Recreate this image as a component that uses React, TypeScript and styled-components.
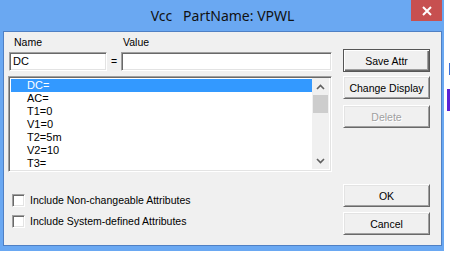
import styled, { createGlobalStyle } from "styled-components";

const GlobalStyle = createGlobalStyle`
  html, body {
    margin: 0;
    padding: 0;
  }
  body {
    width: 450px;
    height: 256px;
    overflow: hidden;
    background: #ffffff;
    font-family: "Liberation Sans", Arial, sans-serif;
    font-size: 10.5px;
    color: #000;
  }
`;

const Screen = styled.div`
  display: flex;
  width: 450px;
  height: 256px;
`;

const Window = styled.div`
  width: 444px;
  height: 251px;
  box-sizing: border-box;
  background: #6aa8f2;
  display: flex;
  flex-direction: column;
  padding: 0 2px 5px 3px;
`;

const TitleBar = styled.div`
  height: 31px;
  flex-shrink: 0;
  display: grid;
  grid-template-columns: 1fr auto 1fr;
`;

const TitleText = styled.div`
  grid-column: 2;
  padding-top: 6px;
  font-family: "Noto Sans", "Open Sans", sans-serif;
  font-size: 14px;
  line-height: 20px;
  white-space: pre;
  color: #111;
`;

const CloseButton = styled.div`
  grid-column: 3;
  justify-self: end;
  width: 31px;
  height: 21px;
  background: #c75050;
  display: flex;
  align-items: center;
  justify-content: center;
`;

const Client = styled.div`
  flex: 1;
  background: #f0f0f0;
  border: 1px solid #4f80c4;
  display: grid;
  grid-template-columns: 324px 87px;
  column-gap: 11px;
  padding-left: 4px;
`;

const LeftColumn = styled.div`
  display: flex;
  flex-direction: column;
`;

const LabelRow = styled.div`
  display: flex;
  margin-top: 4px;
  height: 13px;
  line-height: 13px;
  padding-left: 6px;
`;

const Label = styled.span<{ $width?: number }>`
  width: ${(p) => (p.$width ? `${p.$width}px` : "auto")};
`;

const FieldRow = styled.div`
  display: flex;
  margin-top: 3px;
  padding-left: 1px;
  height: 19px;
`;

const sunken = `
  box-sizing: border-box;
  background: #ffffff;
  border: 1px solid;
  border-color: #a0a0a0 #ffffff #ffffff #a0a0a0;
  box-shadow: inset 1px 1px #696969, inset -1px -1px #e3e3e3;
`;

const TextBox = styled.div<{ $width?: number }>`
  ${sunken}
  width: ${(p) => (p.$width ? `${p.$width}px` : "auto")};
  flex: ${(p) => (p.$width ? "none" : "1")};
  height: 19px;
  line-height: 17px;
  padding-left: 3px;
  font-size: 11px;
`;

const Equals = styled.span`
  width: 14px;
  text-align: center;
  line-height: 19px;
`;

const ListBox = styled.div`
  ${sunken}
  margin-top: 5px;
  height: 96px;
  display: flex;
  padding: 1px 2px 2px 2px;
  overflow: hidden;
`;

const ListItems = styled.div`
  flex: 1;
  overflow: hidden;
  padding-top: 1px;
`;

const ListRow = styled.div<{ $selected?: boolean }>`
  height: 13px;
  line-height: 13px;
  padding-left: 16px;
  font-size: 11px;
  background: ${(p) => (p.$selected ? "#3399ff" : "transparent")};
  color: ${(p) => (p.$selected ? "#ffffff" : "#000000")};
`;

const ScrollBar = styled.div`
  width: 17px;
  background: #f0f0f0;
  display: flex;
  flex-direction: column;
`;

const ScrollArrow = styled.div`
  height: 17px;
  display: flex;
  align-items: center;
  justify-content: center;
`;

const ScrollTrack = styled.div`
  flex: 1;
  display: flex;
  flex-direction: column;
  padding: 0 1px;
`;

const ScrollThumb = styled.div`
  height: 18px;
  background: #cdcdcd;
`;

const CheckArea = styled.div`
  margin-top: 22px;
  padding-left: 4px;
  display: flex;
  flex-direction: column;
  gap: 8px;
`;

const CheckRow = styled.label`
  display: flex;
  align-items: center;
  gap: 5px;
  height: 13px;
  line-height: 13px;
`;

const CheckBox = styled.span`
  box-sizing: border-box;
  width: 13px;
  height: 13px;
  background: #ffffff;
  border: 1px solid;
  border-color: #a0a0a0 #ffffff #ffffff #a0a0a0;
  box-shadow: inset 1px 1px #696969, inset -1px -1px #e3e3e3;
`;

const RightColumn = styled.div`
  display: flex;
  flex-direction: column;
  padding-top: 17px;
`;

const Button = styled.div<{ $primary?: boolean; $disabled?: boolean; $gap?: number }>`
  box-sizing: border-box;
  height: 23px;
  margin-top: ${(p) => p.$gap ?? 0}px;
  display: flex;
  align-items: center;
  justify-content: center;
  background: #f0f0f0;
  border: 1px solid;
  border-color: ${(p) =>
    p.$primary ? "#555555" : "#ffffff #696969 #696969 #ffffff"};
  box-shadow: ${(p) =>
    p.$primary
      ? "inset 1px 1px #ffffff, inset -1px -1px #696969, inset -2px -2px #a0a0a0"
      : "inset 1px 1px #e3e3e3, inset -1px -1px #a0a0a0"};
  color: ${(p) => (p.$disabled ? "#a0a0a0" : "#000000")};
  text-shadow: ${(p) => (p.$disabled ? "1px 1px #ffffff" : "none")};
`;

const DesktopEdge = styled.div`
  flex: 1;
  display: flex;
  flex-direction: column;
  align-items: flex-end;
`;

const EdgeMark = styled.div<{ $w: number; $h: number; $top: number; $color: string }>`
  width: ${(p) => p.$w}px;
  height: ${(p) => p.$h}px;
  margin-top: ${(p) => p.$top}px;
  background: ${(p) => p.$color};
`;

const Chevron = ({ up }: { up?: boolean }) => (
  <svg width="9" height="6" viewBox="0 0 9 6">
    <path
      d={up ? "M1 5 L4.5 1.5 L8 5" : "M1 1 L4.5 4.5 L8 1"}
      fill="none"
      stroke="#606060"
      strokeWidth="1.6"
    />
  </svg>
);

const items = ["DC=", "AC=", "T1=0", "V1=0", "T2=5m", "V2=10", "T3="];

export default function App() {
  return (
    <>
      <GlobalStyle />
      <Screen>
        <Window>
          <TitleBar>
            <TitleText>{"Vcc   PartName: VPWL"}</TitleText>
            <CloseButton>
              <svg width="10" height="10" viewBox="0 0 10 10">
                <path d="M1 1 L9 9 M9 1 L1 9" stroke="#ffffff" strokeWidth="2" />
              </svg>
            </CloseButton>
          </TitleBar>
          <Client>
            <LeftColumn>
              <LabelRow>
                <Label $width={109}>Name</Label>
                <Label>Value</Label>
              </LabelRow>
              <FieldRow>
                <TextBox $width={98}>DC</TextBox>
                <Equals>=</Equals>
                <TextBox />
              </FieldRow>
              <ListBox>
                <ListItems>
                  {items.map((it, i) => (
                    <ListRow key={it} $selected={i === 0}>
                      {it}
                    </ListRow>
                  ))}
                </ListItems>
                <ScrollBar>
                  <ScrollArrow>
                    <Chevron up />
                  </ScrollArrow>
                  <ScrollTrack>
                    <ScrollThumb />
                  </ScrollTrack>
                  <ScrollArrow>
                    <Chevron />
                  </ScrollArrow>
                </ScrollBar>
              </ListBox>
              <CheckArea>
                <CheckRow>
                  <CheckBox />
                  Include Non-changeable Attributes
                </CheckRow>
                <CheckRow>
                  <CheckBox />
                  Include System-defined Attributes
                </CheckRow>
              </CheckArea>
            </LeftColumn>
            <RightColumn>
              <Button $primary>Save Attr</Button>
              <Button $gap={4}>Change Display</Button>
              <Button $gap={6} $disabled>
                Delete
              </Button>
              <Button $gap={56}>OK</Button>
              <Button $gap={5}>Cancel</Button>
            </RightColumn>
          </Client>
        </Window>
        <DesktopEdge>
          <EdgeMark $w={1} $h={12} $top={63} $color="#3a6fd8" />
          <EdgeMark $w={3} $h={22} $top={14} $color="#5b22d6" />
        </DesktopEdge>
      </Screen>
    </>
  );
}
